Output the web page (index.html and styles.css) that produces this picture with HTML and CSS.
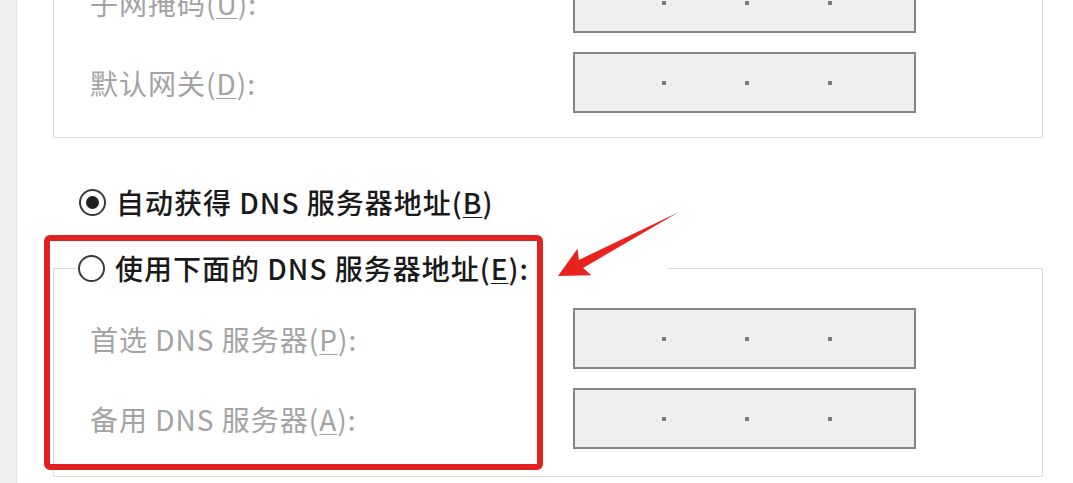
FILE: index.html
```html
<!DOCTYPE html>
<html lang="zh-CN">
<head>
<meta charset="utf-8">
<title>DNS 设置</title>
<link rel="stylesheet" href="styles.css">
</head>
<body>
<div class="page">
  <div class="side"></div>
  <main class="content">
    <section class="group group-top">
      <div class="row">
        <span class="label">子网掩码(<u>U</u>):</span>
        <div class="ip"><i></i><i></i><i></i></div>
      </div>
      <div class="row">
        <span class="label">默认网关(<u>D</u>):</span>
        <div class="ip"><i></i><i></i><i></i></div>
      </div>
    </section>

    <div class="radio-line">
      <span class="radio checked"></span>
      <span class="radio-text">自动获得 DNS 服务器地址(<u>B</u>)</span>
    </div>

    <fieldset class="group group-dns">
      <legend class="legend">
        <span class="radio"></span>
        <span class="radio-text">使用下面的 DNS 服务器地址(<u>E</u>):</span>
      </legend>
      <div class="rows">
        <div class="row">
          <span class="label">首选 DNS 服务器(<u>P</u>):</span>
          <div class="ip"><i></i><i></i><i></i></div>
        </div>
        <div class="row">
          <span class="label">备用 DNS 服务器(<u>A</u>):</span>
          <div class="ip"><i></i><i></i><i></i></div>
        </div>
      </div>
    </fieldset>
  </main>

  <div class="annot-box"></div>
  <svg class="annot-arrow" width="135" height="80" viewBox="0 0 135 80">
    <polygon points="8,71 27.5,43.7 28.9,54.9 129,7 33.1,62.9 41.5,70.3" fill="#e8231f"/>
  </svg>
</div>
</body>
</html>
```

FILE: styles.css
```css
html, body {
  margin: 0;
  padding: 0;
  background: #ffffff;
}

.page {
  position: relative;
  width: 1073px;
  height: 483px;
  overflow: hidden;
  display: flex;
  font-family: "Noto Sans CJK SC", "Noto Sans", sans-serif;
  font-size: 28px;
  letter-spacing: 1px;
}

.side {
  width: 16px;
  flex: none;
  background: #efefef;
  border-right: 1px solid #e2e2e2;
}

.content {
  flex: 1;
  display: flex;
  flex-direction: column;
  align-items: flex-start;
}

.group {
  box-sizing: border-box;
  width: 990px;
  margin: 0 0 0 36px;
  border: 1px solid #dcdcdc;
}

.group-top {
  margin-top: -48px;
  padding: 19px 0 24px 36px;
  display: grid;
  row-gap: 19px;
}

.row {
  display: grid;
  grid-template-columns: 483px 343px;
  align-items: center;
  height: 61px;
}

.label {
  color: #a3a3a3;
  line-height: 34px;
  white-space: nowrap;
}

.label u, .radio-text u {
  text-underline-offset: 3px;
  text-decoration-thickness: 1px;
}

.ip {
  box-sizing: border-box;
  height: 61px;
  background: #efefef;
  border: 2px solid #858585;
  display: flex;
  align-items: center;
  padding-left: 87px;
  gap: 79px;
}

.ip i {
  display: block;
  width: 4px;
  height: 4px;
  background: #7c7c7c;
}

.radio-line {
  margin: 47px 0 0 62px;
  display: flex;
  align-items: center;
  height: 34px;
}

.radio {
  box-sizing: border-box;
  width: 27px;
  height: 27px;
  border: 2px solid #3a3a3a;
  border-radius: 50%;
  background: #fff;
  display: flex;
  align-items: center;
  justify-content: center;
  flex: none;
}

.radio.checked::after {
  content: "";
  width: 13px;
  height: 13px;
  border-radius: 50%;
  background: #1f1f1f;
}

.radio-text {
  margin-left: 10px;
  color: #1a1a1a;
  font-weight: 500;
  line-height: 34px;
  white-space: nowrap;
}

.group-dns {
  margin-top: 32px;
  padding: 0;
  min-width: 0;
}

.legend {
  box-sizing: border-box;
  width: 589px;
  margin-left: 24px;
  padding: 0;
  display: flex;
  align-items: center;
  height: 34px;
  background: #fff;
}

.rows {
  display: grid;
  row-gap: 19px;
  padding: 23px 0 27px 36px;
}

.annot-box {
  position: absolute;
  left: 44px;
  top: 235px;
  width: 499px;
  height: 235px;
  box-sizing: border-box;
  border: 6px solid #e2221e;
  border-radius: 6px;
}

.annot-arrow {
  position: absolute;
  left: 550px;
  top: 205px;
}
```
